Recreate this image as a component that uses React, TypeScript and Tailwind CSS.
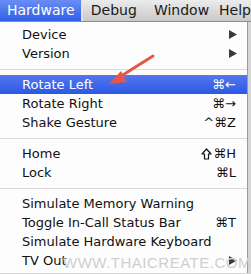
import React from 'react';

type Item =
  | { kind: 'sep' }
  | { kind: 'item'; label: string; shortcut?: string; shift?: boolean; sub?: boolean; active?: boolean };

const items: Item[] = [
  { kind: 'item', label: 'Device', sub: true },
  { kind: 'item', label: 'Version', sub: true },
  { kind: 'sep' },
  { kind: 'item', label: 'Rotate Left', shortcut: '⌘←', active: true },
  { kind: 'item', label: 'Rotate Right', shortcut: '⌘→' },
  { kind: 'item', label: 'Shake Gesture', shortcut: '^⌘Z' },
  { kind: 'sep' },
  { kind: 'item', label: 'Home', shortcut: '⌘H', shift: true },
  { kind: 'item', label: 'Lock', shortcut: '⌘L' },
  { kind: 'sep' },
  { kind: 'item', label: 'Simulate Memory Warning' },
  { kind: 'item', label: 'Toggle In-Call Status Bar', shortcut: '⌘T' },
  { kind: 'item', label: 'Simulate Hardware Keyboard' },
  { kind: 'item', label: 'TV Out', sub: true },
];

const Triangle = () => (
  <svg width="8" height="9" viewBox="0 0 8 9" className="block">
    <path d="M0 0 L8 4.5 L0 9 Z" fill="#3a3a3a" />
  </svg>
);

// outlined shift arrow
const Shift = () => (
  <svg width="11" height="12" viewBox="0 0 11 12" className="block mr-[1px]">
    <path d="M5.5 1 L10 6 L7.5 6 L7.5 11 L3.5 11 L3.5 6 L1 6 Z" fill="none" stroke="#111" strokeWidth="1.2" strokeLinejoin="round" />
  </svg>
);

export default function App() {
  return (
    <div
      className="relative w-[251px] h-[274px] overflow-hidden bg-[#d6d6d6] text-[13px]"
      style={{ fontFamily: '"DejaVu Sans", "Lucida Grande", sans-serif' }}
    >
      {/* Menu bar */}
      <div className="flex h-[22px] items-center bg-gradient-to-b from-[#ececec] to-[#c9c9c9] border-b border-[#8d8d8d] text-[#1a1a1a] text-[14px] whitespace-nowrap">
        <div className="flex h-full w-[82px] items-center pl-[7px] bg-gradient-to-b from-[#6b8cf5] to-[#2f5fe6] text-white">
          Hardware
        </div>
        <div className="h-full w-[2px] bg-[#e4e4e4]" />
        <div className="pl-[8px]">Debug</div>
        <div className="pl-[17px]">Window</div>
        <div className="pl-[10px]">Help</div>
      </div>

      {/* Dropdown */}
      <div className="w-[248px] bg-[#fdfdfd] border-r border-[#9a9a9a] py-[3px] text-[#111]">
        {items.map((it, i) =>
          it.kind === 'sep' ? (
            <div key={i} className="flex h-[12px] items-center">
              <div className="h-px w-full bg-[#dadada]" />
            </div>
          ) : (
            <div
              key={i}
              className={`relative flex h-[19px] items-center pl-[22px] pr-[10px] whitespace-nowrap ${
                it.active ? 'bg-gradient-to-b from-[#5577ef] to-[#2a57e4] text-white' : ''
              }`}
            >
              <span className="flex-1">{it.label}</span>
              {it.shift && <Shift />}
              {it.shortcut && <span className="pr-[1px]">{it.shortcut}</span>}
              {it.sub && <Triangle />}
            </div>
          )
        )}
      </div>

      {/* Watermark */}
      <div
        className="absolute left-[63px] top-[252px] text-[15px] tracking-[0.5px] text-[#cfcfcf]"
        style={{ fontFamily: '"Liberation Sans", Arial, sans-serif' }}
      >
        WWW.THAICREATE.COM
      </div>

      {/* Red pointer arrow */}
      <svg className="absolute left-0 top-0" width="251" height="274" viewBox="0 0 251 274">
        <line x1="153" y1="56" x2="118" y2="78" stroke="#e4574a" strokeWidth="3" strokeLinecap="round" />
        <path d="M109 84 L121 71 L127 82 Z" fill="#e4574a" />
      </svg>
    </div>
  );
}
